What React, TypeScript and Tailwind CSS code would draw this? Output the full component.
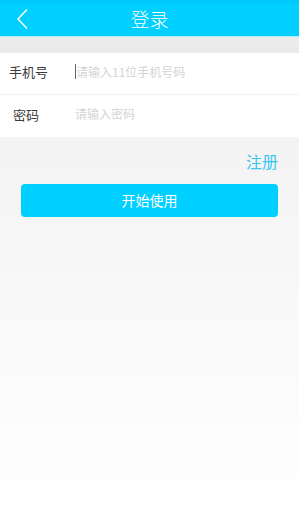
export default function App() {
  return (
    <div
      className="flex h-[512px] w-[299px] flex-col bg-gradient-to-b from-[#efefef] to-white"
      style={{ fontFamily: '"Noto Sans CJK SC", "Noto Sans", sans-serif' }}
    >
      <div className="relative flex h-[37px] items-center justify-center border-b border-[#a8ecff] bg-gradient-to-b from-[#00c6f8] to-[#00cfff] to-[15%]">
        <svg className="absolute left-[15px] top-[8px]" width="16" height="22" viewBox="0 0 16 22" fill="none">
          <path d="M12 1.5 L3 11 L12 20.5" stroke="white" strokeWidth="1.5" />
        </svg>
        <span className="text-[19px] font-light leading-none text-white">登录</span>
      </div>
      <div className="h-[16px] bg-[#ebebeb]" />
      <div className="bg-white">
        <div className="flex h-[42px] items-center border-b border-[#f0f0f0] pb-[4px]">
          <span className="w-[75px] pl-[9px] text-[13px] leading-none text-[#3a3a3a]">手机号</span>
          <span className="h-[15px] w-px bg-[#666]" />
          <span className="text-[12px] leading-none text-[#d4d4d4]">请输入11位手机号码</span>
        </div>
        <div className="flex h-[42px] items-center pb-[4px]">
          <span className="w-[75px] pl-[13px] text-[13px] leading-none text-[#3a3a3a]">密码</span>
          <span className="text-[12px] leading-none text-[#d4d4d4]">请输入密码</span>
        </div>
      </div>
      <div className="flex justify-end pr-[21px] pt-[12px]">
        <span className="text-[16px] leading-[24px] text-[#3cc6ef]">注册</span>
      </div>
      <div className="px-[21px] pt-[11px]">
        <div className="flex h-[33px] items-center justify-center rounded-[4px] bg-[#00d0ff] text-[14px] text-white">
          开始使用
        </div>
      </div>
    </div>
  );
}
